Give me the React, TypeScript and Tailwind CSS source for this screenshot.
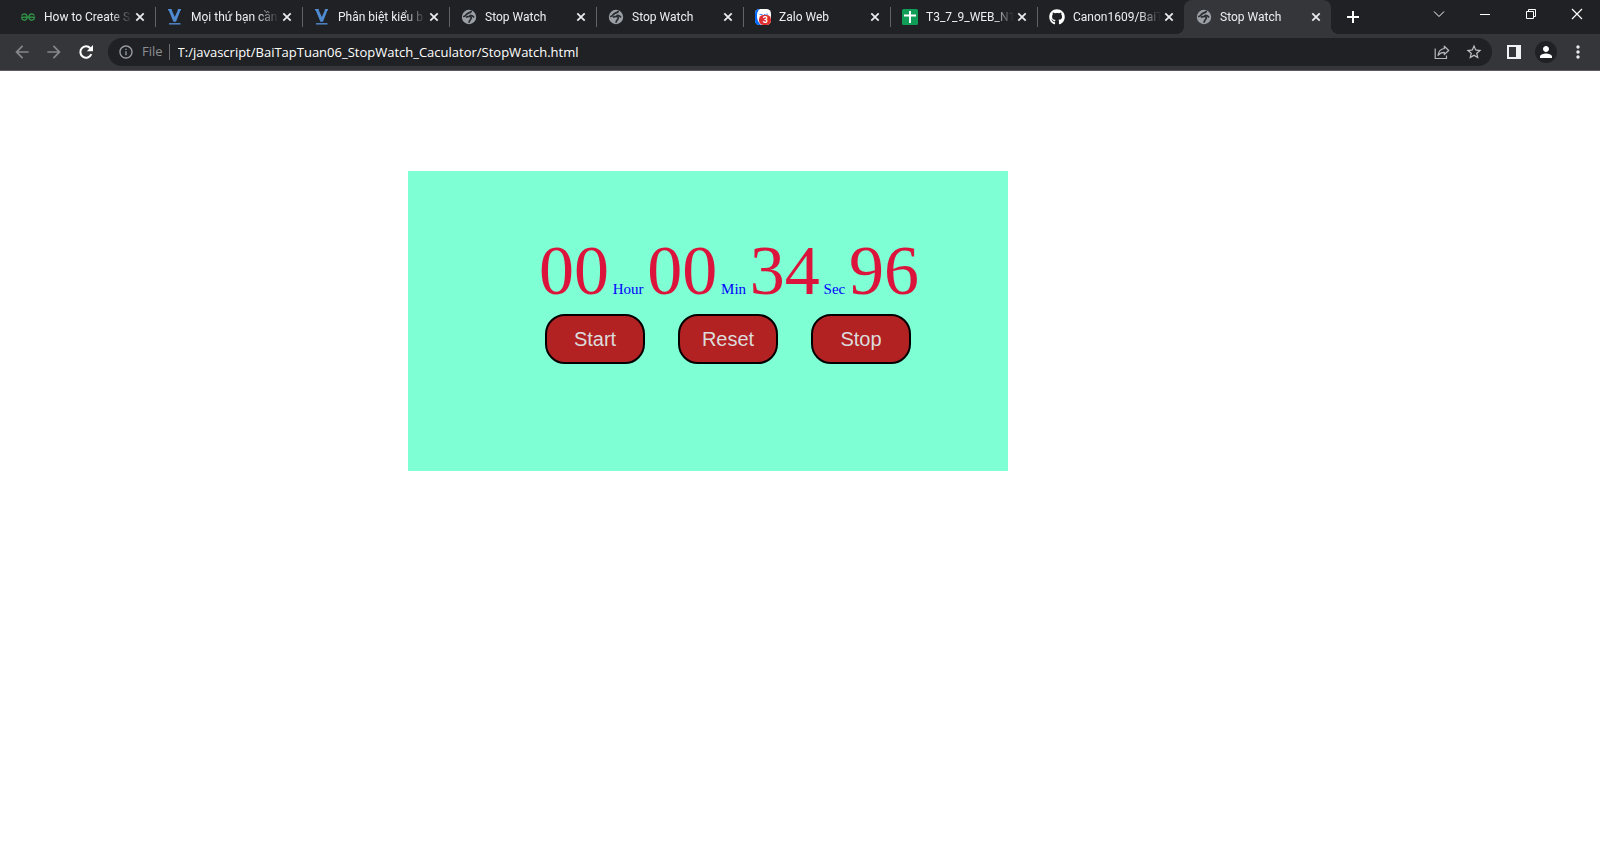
import { useEffect, useState } from "react";
import type { ReactNode } from "react";
import {
  MdArrowBack,
  MdArrowForward,
  MdInfoOutline,
  MdMoreVert,
  MdPerson,
  MdStarBorder,
} from "react-icons/md";
import { FaGithub } from "react-icons/fa";

function GeeksIcon() {
  return (
    <svg viewBox="0 0 16 16" className="size-4" fill="none" stroke="#2f8d46" strokeWidth="1.4">
      <path d="M1.600 6.600C2.300 5.400 3.400 5 4.400 5c1.700 0 2.700 1.300 2.700 3.100S6 11.200 4.400 11.200 1.800 10 1.700 8.300H14.500C14.300 10.200 13.200 11.200 11.700 11.200 10 11.200 9 9.900 9 8.100S10 5 11.700 5c1.100 0 2.100.5 2.700 1.500" />
    </svg>
  );
}

function VIcon() {
  return (
    <svg viewBox="0 0 16 16" className="size-4">
      <path d="M1 0h3.800v1.200L7.800 8l3-6.800V0H14v1.500h-.6L9 12.800H6.400L1.800 1.500H1z" fill="#4f8bd0" />
      <path d="M2 14.800h11.500" stroke="#4f86c6" strokeWidth="1.500" />
    </svg>
  );
}

function GlobeIcon() {
  return (
    <svg viewBox="0 0 16 16" className="size-4">
      <circle cx="8" cy="8" r="7.200" fill="#9aa0a6" />
      <path
        d="M10.200 2.400C9.600 4 8 3.700 6.600 4.400 5 5.200 5.200 6.800 2.800 7.500M5.500 8c2-.8 4.300-.6 4.800.6.600 1.500-1.800 2-2.200 4.500M9 6.500c1.500-.5 2.500.2 3.600 1.300"
        fill="none"
        stroke="#2a2c30"
        strokeWidth="1.700"
        strokeLinecap="round"
      />
    </svg>
  );
}

function ZaloIcon() {
  return (
    <span className="relative block size-4">
      <svg viewBox="0 0 16 16" className="size-4">
        <rect width="16" height="16" rx="4.500" fill="#fff" />
        <path d="M4.500 0C1.500 0 0 1.500 0 4.500v7C0 14.500 1.500 16 4.500 16H6C3.500 14 2 11 2 7.500 2 4 2.500 1.500 5 0z" fill="#0068ff" />
        <path d="M4.500 5.500h3M9 5.500h1.500M12 4.500v1.500" stroke="#3f8bff" strokeWidth="1.200" fill="none" />
        <rect x="4" y="6" width="12" height="10" rx="4.500" fill="#e02d2d" />
      </svg>
      <span className="absolute right-[3px] bottom-0 text-[9px] leading-[10px] font-bold text-white">3</span>
    </span>
  );
}

function SheetIcon() {
  return (
    <svg viewBox="0 0 16 16" className="size-4">
      <rect width="16" height="16" rx="1.500" fill="#0f9d58" />
      <path d="M7 2h2v12H7zM2 5.500h12v2H2z" fill="#fff" />
    </svg>
  );
}

function ReloadIcon() {
  return (
    <svg viewBox="0 0 16 16" className="size-4" fill="none">
      <path d="M13.300 10.200A5.700 5.700 0 1 1 12.300 4.200" stroke="#fff" strokeWidth="2.100" />
      <path d="M15 1v6.200H8.800z" fill="#fff" />
    </svg>
  );
}

function ShareIcon() {
  return (
    <svg viewBox="0 0 16 16" className="size-4" fill="none" stroke="#b4b7bb" strokeWidth="1.200">
      <path d="M1.200 4.500v10h11.300v-3" />
      <path d="M10.300 2.200 14.700 6.500 10.300 10.500V8.300C7.500 8.300 5.600 9.200 4 11.300 4.500 7.500 6.600 5 10.300 4.500z" strokeLinejoin="round" />
    </svg>
  );
}

function CloseIcon() {
  return (
    <svg viewBox="0 0 16 16" className="size-4" stroke="#e8eaed" strokeWidth="1.800">
      <path d="M4.300 4.300l7.400 7.400M11.700 4.300l-7.400 7.400" />
    </svg>
  );
}

type Tab = { title: string; icon: ReactNode; active?: boolean };

const tabs: Tab[] = [
  { title: "How to Create S", icon: <GeeksIcon /> },
  { title: "Mọi thứ bạn cần", icon: <VIcon /> },
  { title: "Phân biệt kiểu b", icon: <VIcon /> },
  { title: "Stop Watch", icon: <GlobeIcon /> },
  { title: "Stop Watch", icon: <GlobeIcon /> },
  { title: "Zalo Web", icon: <ZaloIcon /> },
  { title: "T3_7_9_WEB_N1", icon: <SheetIcon /> },
  { title: "Canon1609/BaiT", icon: <FaGithub className="size-4 text-white" /> },
  { title: "Stop Watch", icon: <GlobeIcon />, active: true },
];

function BrowserTab({ title, icon, active }: Tab) {
  return (
    <div
      className={
        active
          ? "relative flex h-full w-[147px] min-w-0 items-center rounded-t-lg bg-[#35363a] pr-[7px] pl-3"
          : "relative flex h-full w-[147px] min-w-0 items-center pr-[7px] pl-3"
      }
    >
      {active && (
        <>
          <span className="absolute bottom-0 -left-2 size-2 bg-[radial-gradient(circle_at_0_0,transparent_8px,#35363a_8px)]" />
          <span className="absolute -right-2 bottom-0 size-2 bg-[radial-gradient(circle_at_100%_0,transparent_8px,#35363a_8px)]" />
        </>
      )}
      <span className="flex size-4 shrink-0 items-center justify-center">{icon}</span>
      <a
        href="#"
        className="ml-2 min-w-0 flex-1 overflow-hidden mask-r-from-75% text-[12px] leading-5 whitespace-nowrap text-[#eceef1]"
      >
        {title}
      </a>
      <button type="button" aria-label="Close tab" className="shrink-0">
        <CloseIcon />
      </button>
    </div>
  );
}

function WindowButton({ label, children }: { label: string; children: ReactNode }) {
  return (
    <button type="button" aria-label={label} className="flex h-7 w-[46px] items-center justify-center">
      <svg viewBox="0 0 12 12" className="size-3" fill="none" stroke="#fff">
        {children}
      </svg>
    </button>
  );
}

function ToolButton({ label, children }: { label: string; children: ReactNode }) {
  return (
    <button type="button" aria-label={label} className="flex h-7 w-8 shrink-0 items-center justify-center">
      {children}
    </button>
  );
}

function BrowserChrome() {
  return (
    <header className="font-[Roboto,'Noto_Sans',sans-serif]">
      <div className="flex h-[34px] bg-[#202124] pl-2">
        <nav className="flex min-w-0">
          {tabs.map((tab, i) => (
            <div key={i} className="flex min-w-0 items-center">
              <BrowserTab {...tab} />
              {i < tabs.length - 2 && <span className="-mr-px h-5 w-px shrink-0 bg-[#606368]" />}
            </div>
          ))}
        </nav>
        <button type="button" aria-label="New tab" className="ml-2 flex w-7 shrink-0 items-center justify-center">
          <svg viewBox="0 0 12 12" className="size-3" stroke="#fff" strokeWidth="2">
            <path d="M6 0v12M0 6h12" />
          </svg>
        </button>
        <div className="ml-auto flex shrink-0">
          <WindowButton label="Search tabs">
            <path d="M1 3.500 6 8.500 11 3.500" />
          </WindowButton>
          <WindowButton label="Minimize">
            <path d="M1 6.500h10" />
          </WindowButton>
          <WindowButton label="Restore">
            <path d="M1.500 3.500h7v7h-7zM3.500 3.500v-2h7v7h-2" />
          </WindowButton>
          <WindowButton label="Close">
            <path d="M1 1l10 10M11 1 1 11" strokeWidth="1.200" />
          </WindowButton>
        </div>
      </div>
      <div className="flex h-[37px] items-center border-b border-[#5f5a62] bg-[#35363a] px-[6px]">
        <ToolButton label="Back">
          <MdArrowBack className="size-5 text-[#85878a]" />
        </ToolButton>
        <ToolButton label="Forward">
          <MdArrowForward className="size-5 text-[#85878a]" />
        </ToolButton>
        <ToolButton label="Reload">
          <ReloadIcon />
        </ToolButton>
        <div className="mx-[6px] flex h-7 min-w-0 flex-1 items-center rounded-full bg-[#202124] pr-[2px] pl-[10px] font-['Open_Sans','Noto_Sans',sans-serif] text-[13px]">
          <MdInfoOutline className="size-4 shrink-0 text-[#9aa0a6]" />
          <label htmlFor="address" className="ml-2 text-[#8c9095]">
            File
          </label>
          <span className="mr-2 ml-[6px] h-4 w-px bg-[#6a6d71]" />
          <input
            id="address"
            defaultValue="T:/javascript/BaiTapTuan06_StopWatch_Caculator/StopWatch.html"
            className="min-w-0 flex-1 bg-transparent leading-5 text-white outline-none"
          />
          <ToolButton label="Share">
            <ShareIcon />
          </ToolButton>
          <ToolButton label="Bookmark">
            <MdStarBorder className="size-[18px] text-[#c0c3c6]" />
          </ToolButton>
        </div>
        <ToolButton label="Side panel">
          <svg viewBox="0 0 14 14" className="size-[14px]">
            <path d="M0 0h14v14H0zM2 2v10h7V2z" fill="#f1f3f4" fillRule="evenodd" />
          </svg>
        </ToolButton>
        <ToolButton label="Profile">
          <span className="flex size-[22px] items-center justify-center rounded-full bg-[#202124]">
            <MdPerson className="size-[18px] text-white" />
          </span>
        </ToolButton>
        <ToolButton label="Menu">
          <MdMoreVert className="size-5 text-[#e8eaed]" />
        </ToolButton>
      </div>
    </header>
  );
}

const pad = (n: number) => String(n).padStart(2, "0");

function StopWatch() {
  const [ticks, setTicks] = useState(3496);
  const [running, setRunning] = useState(false);

  useEffect(() => {
    if (!running) return;
    const id = setInterval(() => setTicks((t) => t + 1), 10);
    return () => clearInterval(id);
  }, [running]);

  const unit = "text-[15px] leading-none text-[#0000ff]";
  const button =
    "h-[50px] w-[100px] rounded-[20px] border-2 border-black bg-[#b22222] font-[Liberation_Sans,Arial,sans-serif] text-[20px] text-[#dcdcdc]";

  return (
    <section className="ml-[25.5%] flex h-[300px] w-[600px] flex-col items-center bg-[#7fffd4] pt-[60px] pl-10 font-[Liberation_Serif,'Times_New_Roman',serif]">
      <p className="ml-[2px] text-[70px] leading-[80px] whitespace-nowrap text-[#dc143c]">
        {pad(Math.floor(ticks / 360000))}
        <span className={unit}> Hour </span>
        {pad(Math.floor(ticks / 6000) % 60)}
        <span className={unit}> Min </span>
        {pad(Math.floor(ticks / 100) % 60)}
        <span className={unit}> Sec </span>
        {pad(ticks % 100)}
      </p>
      <div className="mt-[3px] flex gap-[33px]">
        <button type="button" className={button} onClick={() => setRunning(true)}>
          Start
        </button>
        <button
          type="button"
          className={button}
          onClick={() => {
            setRunning(false);
            setTicks(0);
          }}
        >
          Reset
        </button>
        <button type="button" className={button} onClick={() => setRunning(false)}>
          Stop
        </button>
      </div>
    </section>
  );
}

export default function App() {
  return (
    <div className="min-h-screen bg-white">
      <BrowserChrome />
      <main className="pt-[100px]">
        <StopWatch />
      </main>
    </div>
  );
}
